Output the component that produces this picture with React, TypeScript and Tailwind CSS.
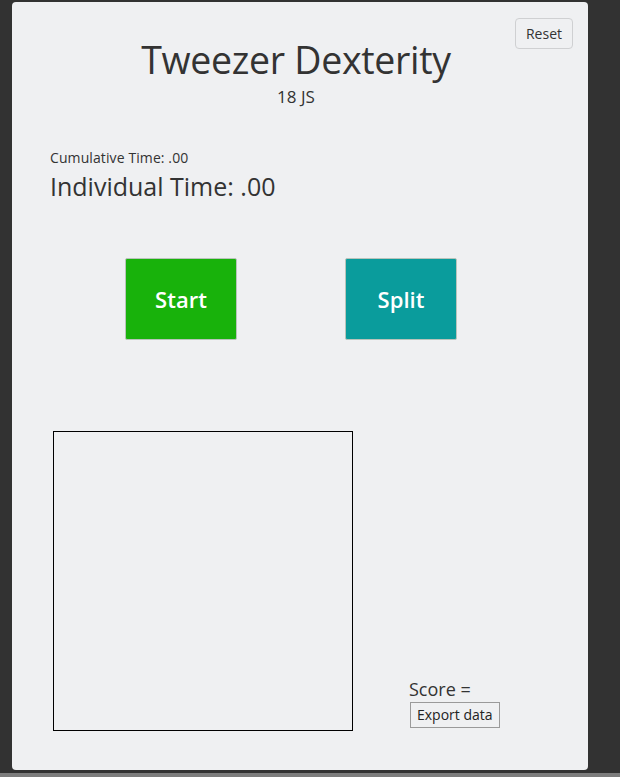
import React from "react";

export default function App() {
  return (
    <div
      className="w-[620px] h-[777px] bg-[#323232] flex flex-col overflow-hidden"
      style={{ fontFamily: '"Open Sans", "Noto Sans", sans-serif' }}
    >
      <div className="ml-[12px] mt-[2px] w-[576px] h-[768px] bg-[#eff0f2] rounded-[4px] text-[#333333] flex flex-col">
        <div className="grid grid-cols-[1fr_auto_1fr] pt-[16px]">
          <div />
          <div className="flex flex-col items-center pt-[22px] pr-[8px]">
            <div className="text-[37.5px] leading-[40px] tracking-[-0.3px]">Tweezer Dexterity</div>
            <div className="text-[17px] leading-[20px] mt-[7px]">18 JS</div>
          </div>
          <div className="flex justify-end items-start pr-[15px]">
            <button className="h-[31px] px-[10px] border border-[#cfd0d2] rounded-[4px] text-[14px] leading-[20px] bg-[#eff0f2] text-[#333]">
              Reset
            </button>
          </div>
        </div>
        <div className="pl-[38px] mt-[42px] flex flex-col">
          <div className="text-[14px] leading-[18px] tracking-[0.1px]">Cumulative Time: .00</div>
          <div className="text-[25px] leading-[30px] mt-[4px]">Individual Time: .00</div>
        </div>
        <div className="flex mt-[57px] pl-[113px] gap-[108px]">
          <button className="w-[112px] h-[82px] bg-[#18b20b] border border-[#b9c4bb] rounded-[2px] text-white text-[22px] font-semibold">
            Start
          </button>
          <button className="w-[112px] h-[82px] bg-[#0a9c9c] border border-[#b9c4bb] rounded-[2px] text-white text-[22px] font-semibold">
            Split
          </button>
        </div>
        <div className="flex mt-[91px] pl-[41px] items-end">
          <div className="w-[300px] h-[300px] border border-black" />
          <div className="ml-[56px] flex flex-col items-start mb-[3px]">
            <div className="text-[18px] leading-[24px]">Score =</div>
            <button className="ml-[1px] mt-[1px] h-[26px] px-[6px] border border-[#9a9a9a] text-[14px] leading-[20px] bg-[#eff0f2] text-[#222]">
              Export data
            </button>
          </div>
        </div>
      </div>
      <div className="mt-[3px] h-[4px] w-full bg-[#7d7d7d]" />
    </div>
  );
}
